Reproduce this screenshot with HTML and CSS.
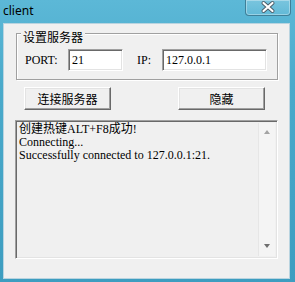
FILE: index.html
```html
<html>
  <head>
    <link rel="stylesheet" href="styles.css">
  </head>

  <body>
    <div class="window">
      <div class="titlebar">
        <span class="title">client</span>
        <div class="close">
          <svg width="46" height="16" viewBox="0 0 46 16">
            <path d="M18.5 4 L27.5 12 M27.5 4 L18.5 12" stroke="#4a5a66" stroke-width="4" stroke-linecap="round" fill="none"/>
            <path d="M18.5 4 L27.5 12 M27.5 4 L18.5 12" stroke="#fff" stroke-width="2.2" stroke-linecap="round" fill="none"/>
          </svg>
        </div>
      </div>

      <div class="client">
        <div class="group">
          <span class="group-label">设置服务器</span>
          <div class="group-row">
            <span class="lbl lbl-port">PORT:</span>
            <input class="field field-port" value="21" readonly>
            <span class="lbl lbl-ip">IP:</span>
            <input class="field field-ip" value="127.0.0.1" readonly>
          </div>
        </div>

        <div class="buttons">
          <button class="btn">连接服务器</button>
          <button class="btn">隐藏</button>
        </div>

        <div class="log">
          <div class="log-text">
            <div>创建热键ALT+F8成功!</div>
            <div>Connecting...</div>
            <div>Successfully connected to 127.0.0.1:21.</div>
          </div>
          <div class="scrollbar">
            <span class="arrow arrow-up"></span>
            <span class="arrow arrow-down"></span>
          </div>
        </div>
      </div>
    </div>
  </body>
</html>
```

FILE: styles.css
```css
/* general styling */
* {
  box-sizing: border-box;
  margin: 0;
  padding: 0;
}

html,
body {
  height: 100%;
  margin: 0;
}

body {
  background-color: #3a9cbf;
}

.window {
  background: linear-gradient(180deg, #5cb8d7 0%, #4aaacb 30%, #3d9dc0 100%);
  display: flex;
  flex-direction: column;
  height: 282px;
  padding: 0 5px 3px 3px;
  width: 295px;
}

/* title bar */
.titlebar {
  align-items: flex-start;
  display: flex;
  height: 23px;
}

.title {
  color: #000;
  font-family: "Noto Sans", sans-serif;
  font-size: 12px;
  line-height: 14px;
  padding-top: 4px;
}

.close {
  background: linear-gradient(180deg, rgba(255, 255, 255, 0.18), rgba(255, 255, 255, 0.05));
  border: 1px solid #3f7f98;
  border-radius: 0 0 4px 4px;
  border-top: none;
  box-shadow: inset 0 0 0 1px rgba(255, 255, 255, 0.35);
  height: 16px;
  margin-left: auto;
  margin-right: -1px;
  width: 46px;
}

.close svg {
  display: block;
  margin: -1px 0 0 -1px;
}

/* client area */
.client {
  background-color: #f0f0f0;
  border: 1px solid #b9d4e0;
  flex: 1;
}

.group {
  border: 1px solid #a0a0a0;
  box-shadow: inset 1px 1px 0 #fff, 1px 1px 0 #fff;
  height: 47px;
  margin: 9px 0 0 12px;
  position: relative;
  width: 262px;
}

.group-label {
  background-color: #f0f0f0;
  font-family: "Noto Sans CJK SC", sans-serif;
  font-size: 12px;
  left: 4px;
  line-height: 13px;
  padding: 0 2px;
  position: absolute;
  top: -4px;
}

.group-row {
  align-items: center;
  display: flex;
  padding: 15px 0 0 8px;
}

.lbl {
  font-family: "Liberation Serif", serif;
  font-size: 12px;
}

.lbl-port {
  width: 43px;
}

.lbl-ip {
  margin-left: 14px;
  width: 25px;
}

.field {
  background-color: #fff;
  border: 1px solid;
  border-color: #a0a0a0 #fff #fff #a0a0a0;
  box-shadow: inset 1px 1px 0 #696969, inset -1px -1px 0 #e3e3e3;
  font-family: "Liberation Serif", serif;
  font-size: 12px;
  height: 22px;
  outline: none;
  padding: 0 3px;
}

.field-port {
  width: 55px;
}

.field-ip {
  width: 105px;
}

/* buttons */
.buttons {
  display: flex;
  gap: 67px;
  margin: 7px 0 0 20px;
}

.btn {
  background-color: #f0f0f0;
  border: 1px solid;
  border-color: #fff #696969 #696969 #fff;
  box-shadow: inset -1px -1px 0 #a0a0a0, inset 1px 1px 0 #e3e3e3;
  color: #000;
  font-family: "Noto Sans CJK SC", sans-serif;
  font-size: 12px;
  height: 23px;
  width: 87px;
}

/* log box */
.log {
  border: 1px solid;
  border-color: #a0a0a0 #fff #fff #a0a0a0;
  box-shadow: inset 1px 1px 0 #696969, inset -1px -1px 0 #e3e3e3;
  display: flex;
  height: 139px;
  margin: 10px 0 0 11px;
  width: 263px;
}

.log-text {
  flex: 1;
  font-family: "Liberation Serif", "Noto Sans CJK SC", serif;
  font-size: 12px;
  line-height: 13px;
  padding: 2px 0 0 3px;
}

.scrollbar {
  background-color: #f4f4f4;
  border-left: 1px solid #e6e6e6;
  display: flex;
  flex-direction: column;
  justify-content: space-between;
  margin: 2px 2px 2px 0;
  padding: 7px 0 8px 5px;
  width: 17px;
}

.arrow {
  border-left: 3.5px solid transparent;
  border-right: 3.5px solid transparent;
  height: 0;
  width: 0;
}

.arrow-up {
  border-bottom: 4px solid #a3a3a3;
}

.arrow-down {
  border-top: 4px solid #6e6e6e;
}
```
